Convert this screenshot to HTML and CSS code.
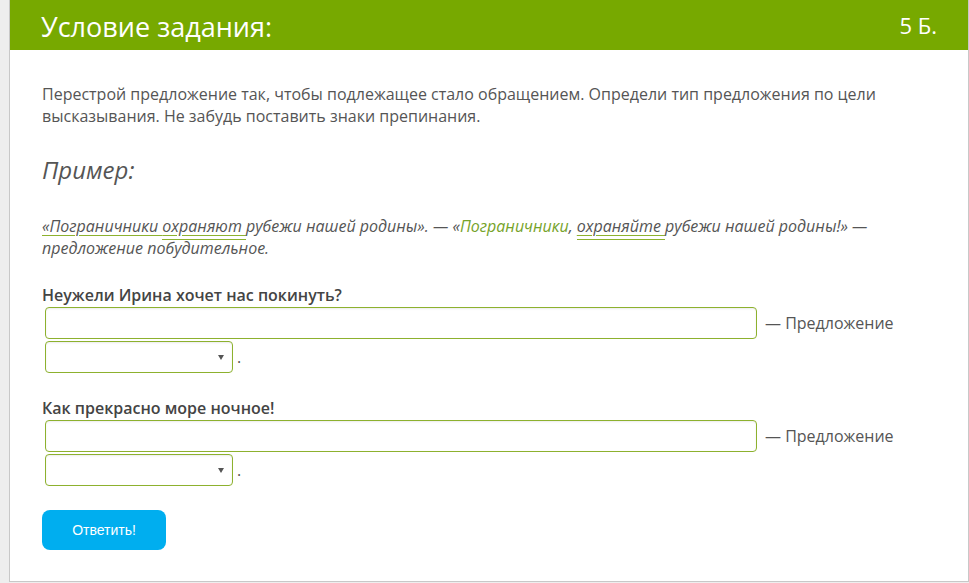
FILE: index.html
```html
<!DOCTYPE html>
<html lang="ru">
<head>
    <meta charset="UTF-8">
    <title>Условие задания</title>
    <link rel="stylesheet" href="styles.css">
</head>
<body>
    <div class="task">
        <div class="task-header">
            <h2>Условие задания:</h2>
            <span class="points">5 Б.</span>
        </div>

        <div class="task-body">
            <p class="intro">Перестрой предложение так, чтобы подлежащее стало обращением. Определи тип предложения по цели высказывания. Не забудь поставить знаки препинания.</p>

            <h3 class="example-title">Пример:</h3>
            <p class="example"><span class="subj">«Пограничники <span class="pred">охраняют </span></span>рубежи нашей родины». — «<span class="appeal">Пограничники</span>, <span class="subj"><span class="pred">охраняйте </span></span>рубежи нашей родины!» — предложение побудительное.</p>

            <div class="question">
                <div class="question-text">Неужели Ирина хочет нас покинуть?</div>
                <div class="answer-line">
                    <input type="text" class="answer-input"> — Предложение
                </div>
                <div class="answer-line">
                    <span class="select-wrap"><select class="answer-select"><option></option></select></span>.
                </div>
            </div>

            <div class="question">
                <div class="question-text">Как прекрасно море ночное!</div>
                <div class="answer-line">
                    <input type="text" class="answer-input"> — Предложение
                </div>
                <div class="answer-line">
                    <span class="select-wrap"><select class="answer-select"><option></option></select></span>.
                </div>
            </div>

            <button class="submit-btn">Ответить!</button>
        </div>
    </div>
</body>
</html>
```

FILE: styles.css
```css
body {
    margin: 0;
    padding: 0 0 0 9px;
    background-color: #eeeeee;
    font-family: "Open Sans", Arial, sans-serif;
    color: #555;
}

.task {
    background-color: #fff;
    border: 1px solid #c8c8c8;
    border-top: none;
}

.task-header {
    background-color: #77a900;
    color: #fff;
    height: 50px;
    padding: 0 31px 0 31px;
    display: flex;
    align-items: center;
    justify-content: space-between;
}

.task-header h2 {
    margin: 0;
    font-size: 27px;
    font-weight: normal;
    position: relative;
    top: 1px;
}

.points {
    font-size: 22px;
}

.task-body {
    padding: 33px 32px 31px 32px;
}

.intro {
    margin: 0;
    font-size: 16px;
    line-height: 22px;
}

.example-title {
    margin: 27px 0 0 0;
    font-size: 24px;
    font-weight: normal;
    font-style: italic;
    line-height: 32px;
}

.example {
    margin: 29px 0 0 0;
    font-size: 16px;
    line-height: 22px;
    font-style: italic;
}

.subj {
    text-decoration: underline;
    text-decoration-color: #8db12e;
    text-underline-offset: 3px;
}

.pred {
    border-bottom: 1px solid #8db12e;
    padding-bottom: 2px;
}

.appeal {
    color: #76a32a;
}

.question {
    margin-top: 25px;
}

.question + .question {
    margin-top: 23px;
}

.question-text {
    font-size: 16px;
    font-weight: 600;
    line-height: 22px;
    color: #444;
}

.answer-line {
    font-size: 16px;
    line-height: 34px;
    height: 34px;
    display: flex;
    align-items: center;
}

.answer-input {
    width: 712px;
    height: 32px;
    box-sizing: border-box;
    margin: 0 8px 0 3px;
    border: 1px solid #8db12e;
    border-radius: 4px;
    box-shadow: inset 0 1px 2px rgba(0, 0, 0, 0.08);
    font-family: inherit;
}

.select-wrap {
    position: relative;
    display: flex;
    margin: 0 4px 0 3px;
}

.select-wrap::after {
    content: "";
    position: absolute;
    right: 9px;
    top: 14px;
    border-left: 3px solid transparent;
    border-right: 3px solid transparent;
    border-top: 5px solid #555;
    pointer-events: none;
}

.answer-select {
    width: 188px;
    height: 32px;
    box-sizing: border-box;
    border: 1px solid #8db12e;
    border-radius: 4px;
    background-color: #fff;
    font-family: inherit;
    appearance: none;
    -webkit-appearance: none;
    box-shadow: inset 0 1px 2px rgba(0, 0, 0, 0.08);
}

.submit-btn {
    margin-top: 23px;
    width: 124px;
    height: 40px;
    background-color: #00aeef;
    color: #fff;
    border: none;
    border-radius: 8px;
    font-family: "Liberation Sans", Arial, sans-serif;
    font-size: 14px;
    cursor: pointer;
}
```
